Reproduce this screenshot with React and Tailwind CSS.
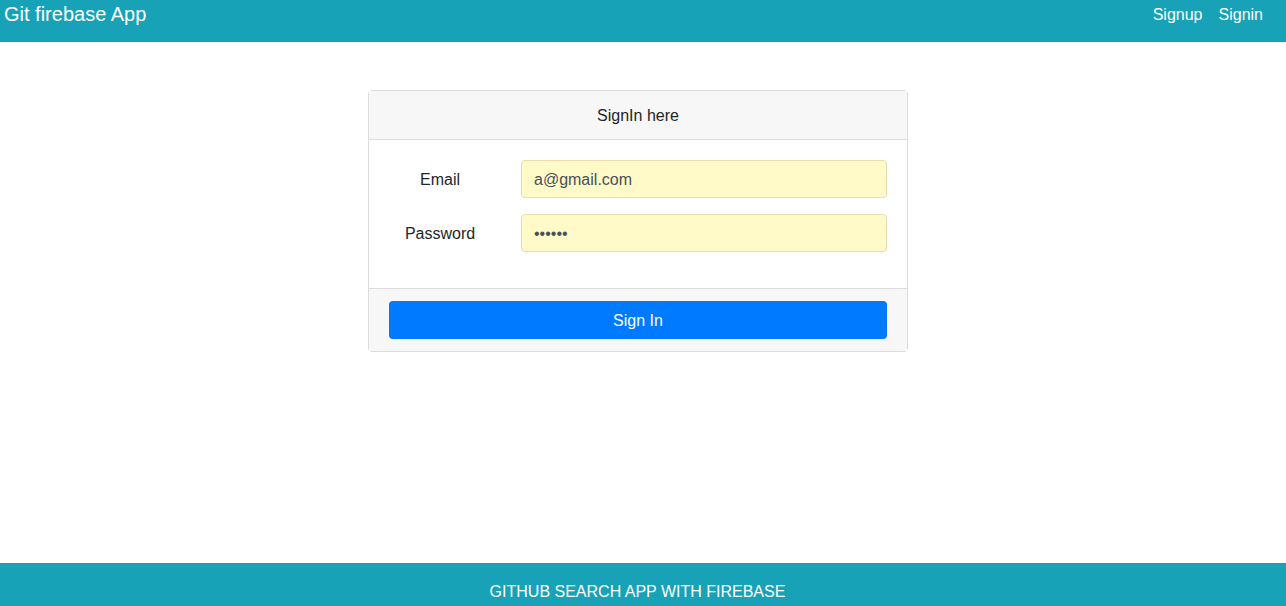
import React from 'react';

export default function App() {
	return (
		<div className="flex h-[606px] flex-col bg-white text-[#212529]" style={{fontFamily: '"Liberation Sans", Arial, sans-serif'}}>
			<header className="flex h-[42px] items-start justify-between bg-[#17a2b8] text-white">
				<div className="pl-[4px] pt-[1px] text-[20px] leading-[26px]">Git firebase App</div>
				<nav className="flex gap-[16px] pr-[23px] pt-[3px] text-[16px] leading-[24px]">
					<a href="#">Signup</a>
					<a href="#">Signin</a>
				</nav>
			</header>
			<main className="flex flex-1 justify-center pr-[10px] pt-[48px]">
				<div className="h-fit w-[540px] rounded-[4px] border border-[#dcdcdc]">
					<div className="flex h-[49px] items-center justify-center border-b border-[#dcdcdc] bg-[#f7f7f7] pt-[2px] text-[16px]">SignIn here</div>
					<div className="flex flex-col gap-[16px] px-[20px] pb-[36px] pt-[20px]">
						<div className="flex items-center">
							<label className="w-[102px] pt-[2px] text-center text-[16px]">Email</label>
							<div className="ml-auto flex h-[38px] w-[366px] items-center rounded-[4px] border border-[#ebdcae] bg-[#fffac8] px-[12px] pt-[2px] text-[16px] text-[#495057]">a@gmail.com</div>
						</div>
						<div className="flex items-center">
							<label className="w-[102px] pt-[2px] text-center text-[16px]">Password</label>
							<div className="ml-auto flex h-[38px] w-[366px] items-center rounded-[4px] border border-[#ebdcae] bg-[#fffac8] px-[12px] pt-[2px] text-[16px] text-[#495057]">••••••</div>
						</div>
					</div>
					<div className="border-t border-[#dcdcdc] bg-[#f7f7f7] px-[20px] py-[12px]">
						<button className="h-[38px] w-full rounded-[4px] bg-[#007bff] pt-[2px] text-[16px] text-white">Sign In</button>
					</div>
				</div>
			</main>
			<footer className="h-[43px] bg-[#17a2b8] pr-[11px] pt-[17px] text-center text-[16px] leading-[24px] text-white">GITHUB SEARCH APP WITH FIREBASE</footer>
		</div>
	);
}
